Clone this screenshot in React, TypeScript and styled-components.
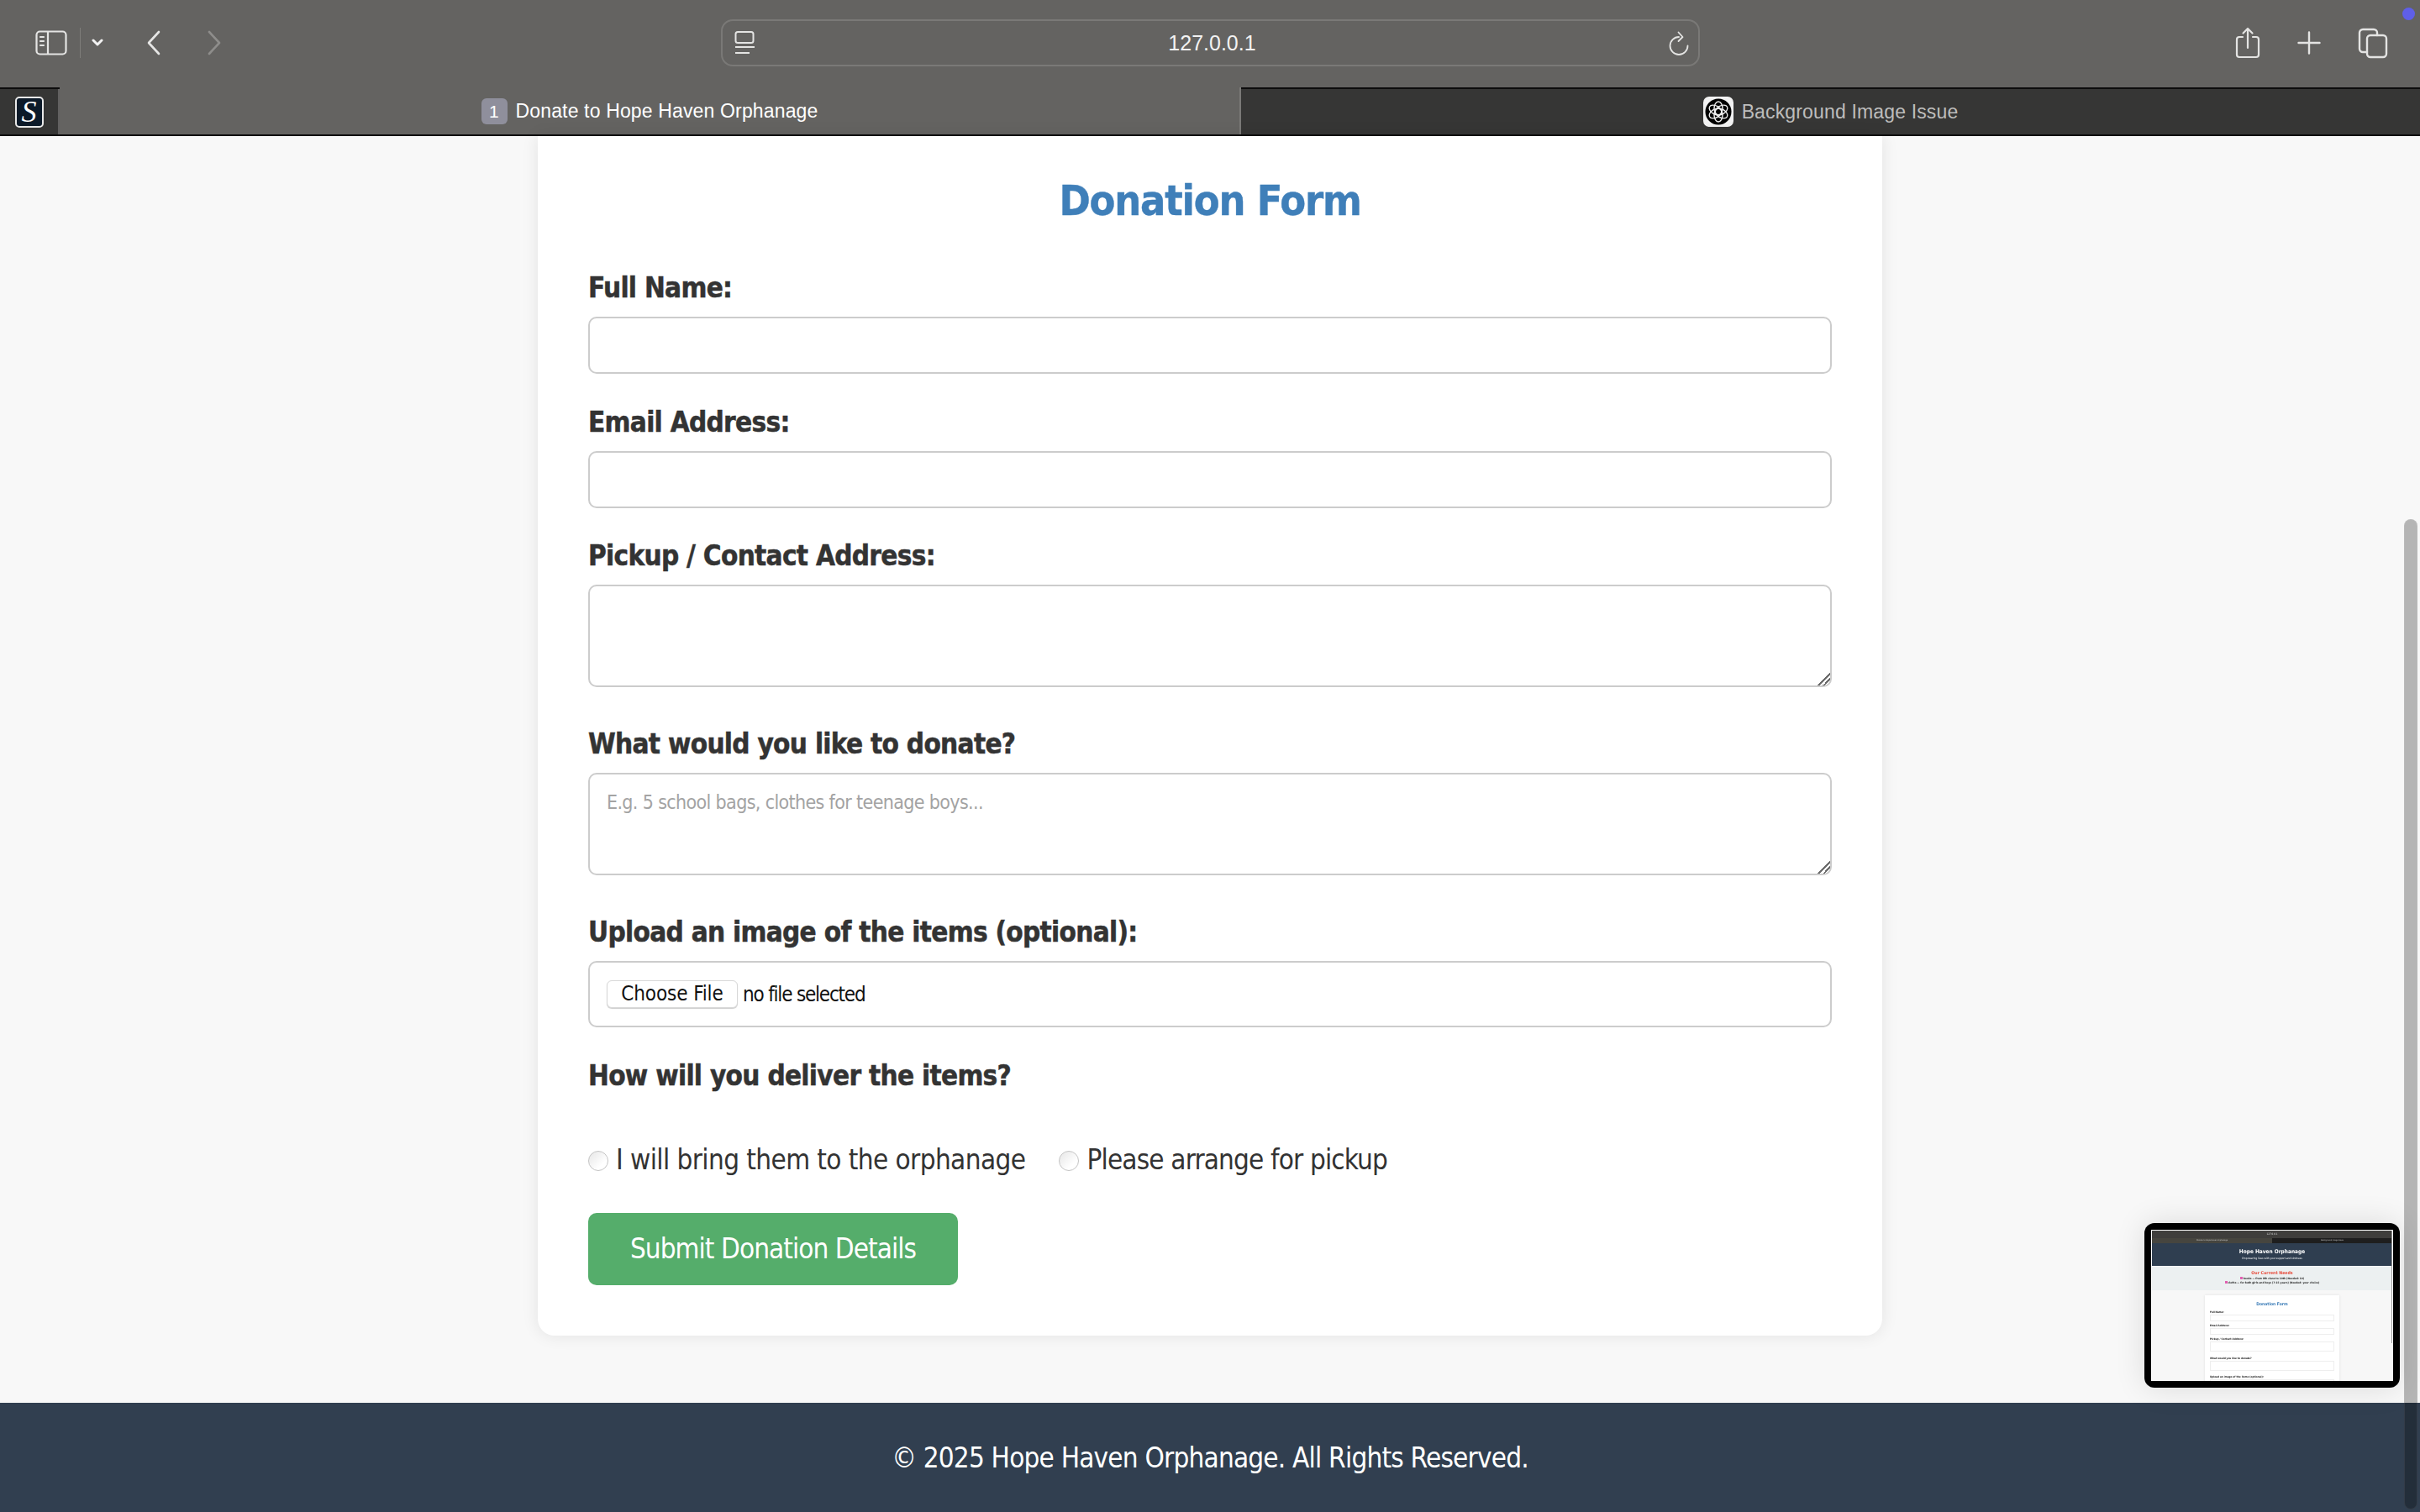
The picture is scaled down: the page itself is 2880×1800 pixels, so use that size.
import React from "react";
import styled, { createGlobalStyle } from "styled-components";

const Global = createGlobalStyle`
  html, body { margin: 0; padding: 0; height: 100%; overflow: hidden; background: #f8f8f8; }
  #root { height: 100%; }
  * { box-sizing: border-box; }
`;

const FONT = `"DejaVu Sans", Verdana, sans-serif`;
const UI = `"Liberation Sans", Arial, sans-serif`;

const Shell = styled.div`
  position: relative;
  width: 2880px;
  height: 1800px;
  overflow: hidden;
  display: flex;
  flex-direction: column;
  font-family: ${FONT};
  font-stretch: condensed;
`;

const Toolbar = styled.header`
  height: 104px;
  flex: none;
  background: #646361;
  display: grid;
  grid-template-columns: 1fr 1165px 1fr;
  align-items: center;
  padding-bottom: 2px;
`;

const ToolLeft = styled.div`
  display: flex;
  align-items: center;
  padding-left: 42px;
`;

const ToolGap = styled.span<{ $w: number }>`
  width: ${(p) => p.$w}px;
  flex: none;
`;

const ToolRight = styled.div`
  display: flex;
  align-items: center;
  justify-content: flex-end;
  padding-right: 38px;
  gap: 44px;
`;

const Address = styled.div`
  height: 56px;
  border: 2px solid #7a7977;
  border-radius: 14px;
  display: flex;
  align-items: center;
  justify-content: space-between;
  padding: 0 10px 0 14px;
  color: #f2f2f2;
  font: 500 25px ${UI};
`;

const Dot = styled.span`
  position: absolute;
  top: 9px;
  right: 6px;
  width: 15px;
  height: 15px;
  border-radius: 50%;
  background: #5f5fe8;
`;

const Tabs = styled.nav`
  height: 58px;
  flex: none;
  display: flex;
  border-top: 2px solid #0d0d0d;
  border-bottom: 2px solid #0d0d0d;
  background: #363635;
  font-family: ${UI};
  font-size: 23px;
  letter-spacing: 0.15px;
`;

const PinTab = styled.div`
  width: 71px;
  display: flex;
  align-items: center;
  justify-content: center;
  border-right: 2px solid #616060;
`;

const PinLogo = styled.span`
  width: 34px;
  height: 37px;
  border: 2px solid #e8e8e8;
  border-radius: 5px;
  background: #0c1a29;
  color: #fff;
  font: italic 36px/32px "Liberation Serif", serif;
  text-align: center;
`;

const Tab = styled.div<{ $active?: boolean }>`
  width: ${(p) => (p.$active ? "1406px" : "auto")};
  flex: ${(p) => (p.$active ? "none" : "1")};
  display: flex;
  align-items: center;
  justify-content: center;
  gap: 10px;
  background: ${(p) => (p.$active ? "#646361" : "#363635")};
  color: ${(p) => (p.$active ? "#ffffff" : "#bdbdbc")};
  border-right: ${(p) => (p.$active ? "2px solid #7a7977" : "none")};
  margin-top: ${(p) => (p.$active ? "-2px" : "0")};
`;

const TabCount = styled.span`
  width: 31px;
  height: 31px;
  border-radius: 6px;
  background: #8f8f9c;
  color: #fff;
  font-size: 21px;
  line-height: 31px;
  text-align: center;
`;

const Main = styled.main`
  flex: 1;
  min-height: 0;
  display: flex;
  flex-direction: column;
  justify-content: space-between;
  background: #f8f8f8;
`;

const Card = styled.form`
  width: 1600px;
  margin: 0 auto;
  background: #fff;
  border-radius: 0 0 20px 20px;
  box-shadow: 0 0 20px rgba(0, 0, 0, 0.09);
  padding: 47px 60px 60px;
  display: flex;
  flex-direction: column;
`;

const Title = styled.h2`
  margin: 0 0 54px;
  text-align: center;
  color: #3f7fb9;
  font-size: 50px;
  line-height: 60px;
  font-weight: 700;
  letter-spacing: -1.2px;
  -webkit-text-stroke: 0.4px #3f7fb9;
`;

const Field = styled.div`
  display: flex;
  flex-direction: column;
  margin-bottom: 37.5px;
`;

const Label = styled.label`
  font-size: 33px;
  line-height: 40px;
  font-weight: 700;
  letter-spacing: -0.7px;
  color: #333;
  margin-bottom: 14px;
  -webkit-text-stroke: 0.5px #333;
`;

const TextInput = styled.input`
  height: 68px;
  border: 2px solid #ccc;
  border-radius: 10px;
  background: #fff;
  padding: 0 20px;
  font: 28px ${FONT};
  font-stretch: condensed;
`;

const TextArea = styled.textarea`
  height: 122px;
  margin-bottom: 10.5px;
  border: 2px solid #ccc;
  border-radius: 10px;
  background: #fff;
  padding: 20px;
  font: 23px ${FONT};
  font-stretch: condensed;
  letter-spacing: -0.64px;
  display: block;
  &::placeholder { color: #a3a3a3; }
  &::-webkit-resizer {
    background: linear-gradient(
      135deg,
      transparent 0 48%,
      #6a6a6a 48% 57%,
      transparent 57% 70%,
      #6a6a6a 70% 79%,
      transparent 79%
    );
  }
`;

const FileBox = styled.div`
  height: 79px;
  border: 2px solid #ccc;
  border-radius: 10px;
  background: #fff;
  display: flex;
  align-items: center;
  padding: 0 20px;
  gap: 6px;
  font-size: 24px;
  color: #111;
`;

const ChooseButton = styled.span`
  width: 156px;
  height: 33px;
  border: 1px solid #d8d8d8;
  border-radius: 6px;
  box-shadow: 0 1px 1px rgba(0, 0, 0, 0.2);
  background: #fff;
  text-align: center;
  line-height: 30px;
  letter-spacing: -0.1px;
`;

const FileName = styled.span`
  letter-spacing: -1.2px;
`;

const DeliveryLabel = styled(Label)`
  margin-bottom: 60px;
`;

const Radios = styled.div`
  display: flex;
  align-items: center;
  gap: 40px;
  margin-bottom: 44px;
`;

const RadioLabel = styled.label<{ $tight?: boolean }>`
  display: flex;
  align-items: center;
  gap: 9px;
  font-size: 33px;
  letter-spacing: ${(p) => (p.$tight ? "-0.85px" : "-0.6px")};
  color: #333;
`;

const Radio = styled.input`
  appearance: none;
  width: 24px;
  height: 24px;
  margin: 4px 0 0;
  border: 1px solid #c4c4c4;
  border-radius: 50%;
  background: linear-gradient(135deg, #e6e6e6, #ffffff 70%);
`;

const Submit = styled.button`
  width: 440px;
  height: 86px;
  border: 0;
  border-radius: 10px;
  background: #55ad6b;
  color: #fff;
  font: 33px ${FONT};
  font-stretch: condensed;
  letter-spacing: -0.95px;
`;

const Footer = styled.footer`
  height: 130px;
  flex: none;
  background: #313f50;
  color: #fff;
  font-size: 33px;
  letter-spacing: -0.8px;
  display: flex;
  align-items: center;
  justify-content: center;
`;

const ScrollThumb = styled.div`
  position: absolute;
  left: 2861px;
  top: 618px;
  width: 16px;
  bottom: 3px;
  border-radius: 8px;
  border: 1px solid rgba(255, 255, 255, 0.07);
  background: rgba(0, 0, 0, 0.27);
`;

const Preview = styled.aside`
  position: absolute;
  left: 2552px;
  top: 1456px;
  width: 304px;
  height: 196px;
  padding: 8px;
  background: #000;
  border-radius: 12px;
  box-shadow: 0 0 36px rgba(0, 0, 0, 0.12);
`;

const Mini = styled.div`
  position: relative;
  width: 288px;
  height: 180px;
  border: 1px solid #fff;
  border-bottom: 0;
  background: #f7f7f7;
  overflow: hidden;
  display: flex;
  flex-direction: column;
  font-family: ${FONT};
  font-stretch: condensed;
  filter: blur(0.3px);
`;

const MiniChrome = styled.div`
  height: 9px;
  background: #3f3e3c;
  color: #ddd;
  font-size: 3px;
  text-align: center;
  line-height: 9px;
  flex: none;
`;

const MiniTabs = styled.div`
  height: 6px;
  background: #1e1e1e;
  display: flex;
  flex: none;
  font-size: 2.4px;
  line-height: 6px;
  color: #ccc;
  text-align: center;
`;

const MiniTab = styled.div<{ $active?: boolean }>`
  flex: 1;
  background: ${(p) => (p.$active ? "#46453f" : "#1e1e1e")};
`;

const MiniHero = styled.div`
  height: 27px;
  flex: none;
  background: #2f3e50;
  color: #fff;
  text-align: center;
  font-size: 6.5px;
  font-weight: 700;
  padding-top: 6px;
  line-height: 9px;
`;

const MiniSub = styled.div`
  font-size: 3.2px;
  font-weight: 400;
  line-height: 6px;
`;

const MiniNeeds = styled.div`
  height: 28px;
  flex: none;
  background: #ecf0f1;
  margin-top: 1px;
  text-align: center;
  font-size: 3.2px;
  line-height: 5px;
  font-weight: 700;
  color: #222;
`;

const MiniNeedsTitle = styled.div`
  color: #e74c3c;
  font-size: 5.2px;
  line-height: 10px;
  padding-top: 2px;
`;

const MiniGift = styled.span`
  display: inline-block;
  width: 3px;
  height: 3px;
  margin-right: 1px;
  background: #e05fb0;
`;

const MiniCard = styled.div`
  width: 160px;
  margin: 6px auto 0;
  flex: 1;
  background: #fff;
  padding: 5.5px 6px 0;
  box-shadow: 0 0 3px rgba(0, 0, 0, 0.1);
`;

const MiniTitle = styled.div`
  text-align: center;
  color: #3f7fb9;
  font-size: 5px;
  font-weight: 700;
  line-height: 9px;
  margin-bottom: 2.5px;
`;

const MiniLabel = styled.div`
  font-size: 3.1px;
  line-height: 6px;
  font-weight: 700;
  color: #222;
`;

const MiniBox = styled.div<{ $tall?: boolean }>`
  height: ${(p) => (p.$tall ? "12px" : "8px")};
  border: 1px solid #eee;
  margin-bottom: ${(p) => (p.$tall ? "4.5px" : "2px")};
`;

const MiniScroll = styled.div`
  position: absolute;
  right: 0;
  top: 0;
  width: 1px;
  height: 134px;
  background: #999;
`;

const Glyph = styled.svg`
  display: block;
  flex: none;
`;

const Stroke = { fill: "none", stroke: "#e4e4e3", strokeLinecap: "round" as const, strokeLinejoin: "round" as const };

const SidebarIcon = () => (
  <Glyph width="38" height="30" viewBox="0 0 38 30" {...Stroke} strokeWidth="2.2">
    <rect x="1.5" y="1.5" width="35" height="27" rx="4" />
    <path d="M15 2v26M6 8h4M6 13h4M6 18h4" />
  </Glyph>
);
const DividerIcon = () => (
  <Glyph width="1" height="36" viewBox="0 0 1 36">
    <rect width="1" height="36" fill="#7e7d7a" />
  </Glyph>
);
const Caret = () => (
  <Glyph width="14" height="10" viewBox="0 0 14 10" {...Stroke} stroke="#f2f2f2" strokeWidth="3">
    <path d="M2 2l5 5 5-5" />
  </Glyph>
);
const Chevron = ({ dir, dim }: { dir: "l" | "r"; dim?: boolean }) => (
  <Glyph width="16" height="30" viewBox="0 0 16 30" {...Stroke} stroke={dim ? "#8e8d8b" : "#e6e6e5"} strokeWidth="2.6">
    <path d={dir === "l" ? "M14 2L2 15l12 13" : "M2 2l12 13L2 28"} />
  </Glyph>
);
const ReaderIcon = () => (
  <Glyph width="25" height="28" viewBox="0 0 25 28" {...Stroke} strokeWidth="2" strokeLinecap="butt">
    <rect x="1.5" y="1" width="21" height="13" rx="2.5" />
    <path d="M1 19h23M1 26h17" />
  </Glyph>
);
const ReloadIcon = () => (
  <Glyph width="24" height="29" viewBox="0 0 24 29" {...Stroke} strokeWidth="1.8">
    <path d="M22.5 17.5A10.5 10.5 0 1 1 12 7M11.5 1.5L16.5 7l-5 5" />
  </Glyph>
);
const ShareIcon = () => (
  <Glyph width="30" height="38" viewBox="0 0 30 38" {...Stroke} strokeWidth="2.2">
    <path d="M9 12H5a3 3 0 0 0-3 3v18a3 3 0 0 0 3 3h20a3 3 0 0 0 3-3V15a3 3 0 0 0-3-3h-4M15 25V2M9.5 7.5L15 2l5.5 5.5" />
  </Glyph>
);
const PlusIcon = () => (
  <Glyph width="28" height="28" viewBox="0 0 28 28" {...Stroke} strokeWidth="2.4">
    <path d="M14 1.5v25M1.5 14h25" />
  </Glyph>
);
const CopyIcon = () => (
  <Glyph width="36" height="37" viewBox="0 0 36 37" {...Stroke} strokeWidth="2.4">
    <rect x="11" y="9" width="23" height="26" rx="4" />
    <path d="M11 29H6a4 4 0 0 1-4-4V6a4 4 0 0 1 4-4h13a4 4 0 0 1 4 4v3" />
  </Glyph>
);
const GptIcon = () => (
  <Glyph width="36" height="36" viewBox="0 0 36 36">
    <rect width="36" height="36" rx="7" fill="#f2f2f2" />
    <circle cx="18" cy="18" r="15.5" fill="#000" />
    <g fill="none" stroke="#eee" strokeWidth="1.4">
      <ellipse cx="18" cy="14" rx="5" ry="8" />
      <ellipse cx="18" cy="14" rx="5" ry="8" transform="rotate(60 18 18)" />
      <ellipse cx="18" cy="14" rx="5" ry="8" transform="rotate(120 18 18)" />
      <ellipse cx="18" cy="14" rx="5" ry="8" transform="rotate(180 18 18)" />
      <ellipse cx="18" cy="14" rx="5" ry="8" transform="rotate(240 18 18)" />
      <ellipse cx="18" cy="14" rx="5" ry="8" transform="rotate(300 18 18)" />
    </g>
  </Glyph>
);

export default function App() {
  return (
    <Shell>
      <Global />
      <Toolbar>
        <ToolLeft>
          <SidebarIcon />
          <ToolGap $w={15} />
          <DividerIcon />
          <ToolGap $w={13} />
          <Caret />
          <ToolGap $w={52} />
          <Chevron dir="l" />
          <ToolGap $w={56} />
          <Chevron dir="r" dim />
        </ToolLeft>
        <Address>
          <ReaderIcon />
          <span>127.0.0.1</span>
          <ReloadIcon />
        </Address>
        <ToolRight>
          <ShareIcon />
          <PlusIcon />
          <CopyIcon />
        </ToolRight>
      </Toolbar>
      <Dot />
      <Tabs>
        <PinTab>
          <PinLogo>S</PinLogo>
        </PinTab>
        <Tab $active>
          <TabCount>1</TabCount>
          Donate to Hope Haven Orphanage
        </Tab>
        <Tab>
          <GptIcon />
          Background Image Issue
        </Tab>
      </Tabs>
      <Main>
        <Card>
          <Title>Donation Form</Title>
          <Field>
            <Label>Full Name:</Label>
            <TextInput type="text" />
          </Field>
          <Field>
            <Label>Email Address:</Label>
            <TextInput type="email" />
          </Field>
          <Field>
            <Label>Pickup / Contact Address:</Label>
            <TextArea />
          </Field>
          <Field>
            <Label>What would you like to donate?</Label>
            <TextArea placeholder="E.g. 5 school bags, clothes for teenage boys..." />
          </Field>
          <Field>
            <Label>Upload an image of the items (optional):</Label>
            <FileBox>
              <ChooseButton>Choose File</ChooseButton>
              <FileName>no file selected</FileName>
            </FileBox>
          </Field>
          <DeliveryLabel>How will you deliver the items?</DeliveryLabel>
          <Radios>
            <RadioLabel>
              <Radio type="radio" name="delivery" />I will bring them to the orphanage
            </RadioLabel>
            <RadioLabel $tight>
              <Radio type="radio" name="delivery" />Please arrange for pickup
            </RadioLabel>
          </Radios>
          <Submit type="button">Submit Donation Details</Submit>
        </Card>
        <Footer>© 2025 Hope Haven Orphanage. All Rights Reserved.</Footer>
      </Main>
      <ScrollThumb />
      <Preview>
        <Mini>
          <MiniChrome>127.0.0.1</MiniChrome>
          <MiniTabs>
            <MiniTab $active>Donate to Hope Haven Orphanage</MiniTab>
            <MiniTab>Background Image Issue</MiniTab>
          </MiniTabs>
          <MiniHero>
            Hope Haven Orphanage
            <MiniSub>Empowering lives with your support and kindness</MiniSub>
          </MiniHero>
          <MiniNeeds>
            <MiniNeedsTitle>Our Current Needs</MiniNeedsTitle>
            <MiniGift />
            books — from 8th class to 10th (Needed: 10)
            <br />
            <MiniGift />
            cloths — for both girls and boys (7-15 years) (Needed: your choice)
          </MiniNeeds>
          <MiniCard>
            <MiniTitle>Donation Form</MiniTitle>
            <MiniLabel>Full Name:</MiniLabel>
            <MiniBox />
            <MiniLabel>Email Address:</MiniLabel>
            <MiniBox />
            <MiniLabel>Pickup / Contact Address:</MiniLabel>
            <MiniBox $tall />
            <MiniLabel>What would you like to donate?</MiniLabel>
            <MiniBox $tall />
            <MiniLabel>Upload an image of the items (optional):</MiniLabel>
            <MiniBox />
          </MiniCard>
          <MiniScroll />
        </Mini>
      </Preview>
    </Shell>
  );
}
